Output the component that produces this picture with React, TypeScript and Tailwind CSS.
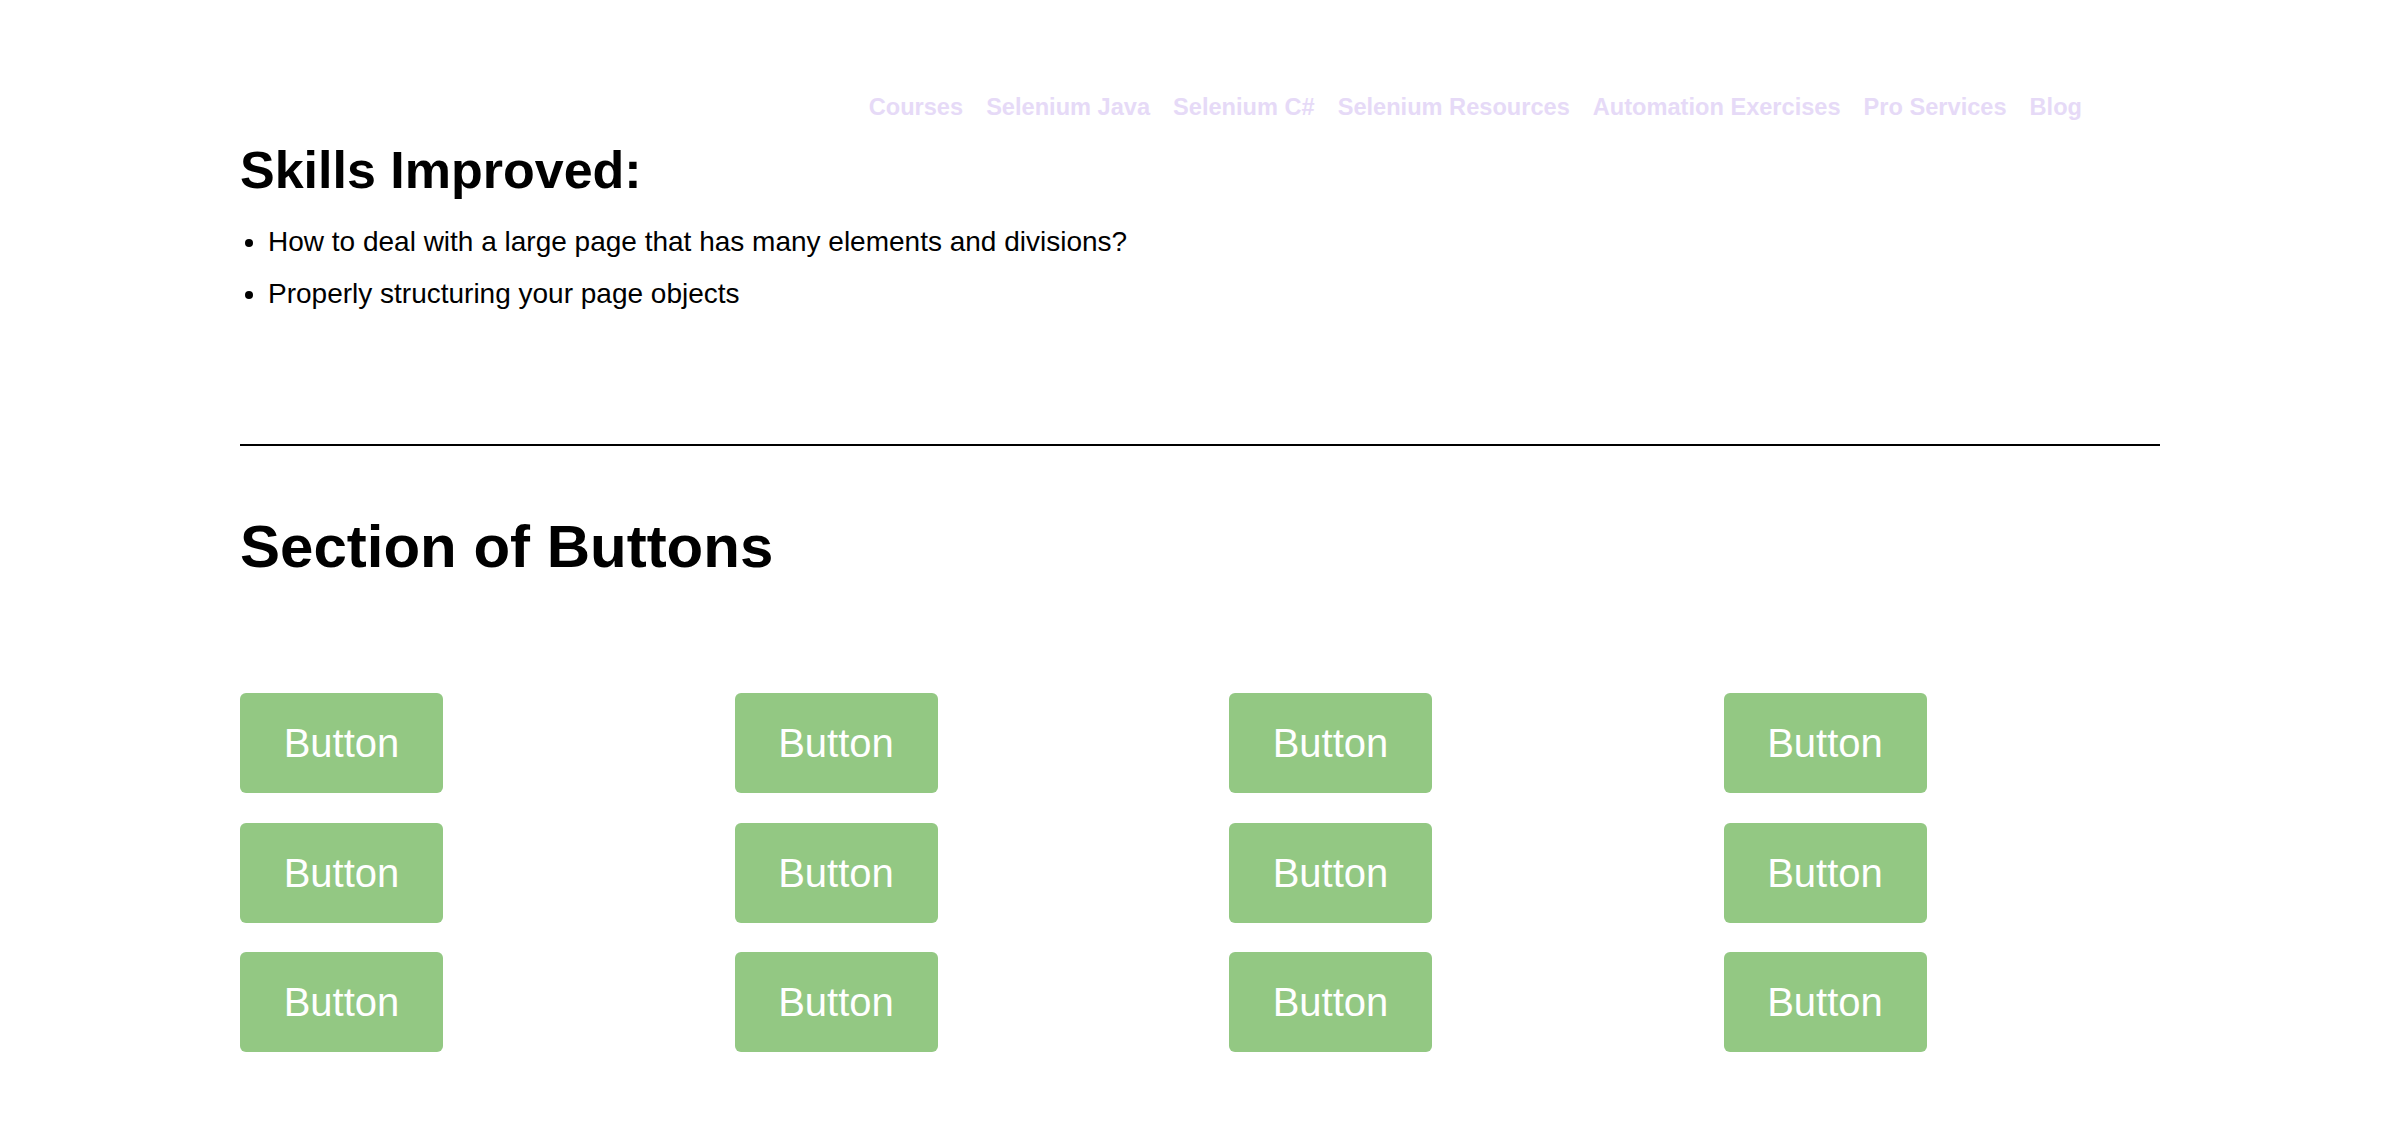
const navLinks = [
  "Courses",
  "Selenium Java",
  "Selenium C#",
  "Selenium Resources",
  "Automation Exercises",
  "Pro Services",
  "Blog",
];

const skills = [
  "How to deal with a large page that has many elements and divisions?",
  "Properly structuring your page objects",
];

const App = () => {
  const buttons = Array.from({ length: 12 }, (_, i) => i);
  return (
    <div className="min-h-screen bg-white font-['Liberation_Sans',Arial,sans-serif] text-black">
      <div className="mx-auto w-[1920px]">
        <nav className="flex justify-end gap-[23px] pt-[93px] pr-[78px] text-[23.6px] leading-[28px] font-bold text-[#e6daf7]">
          {navLinks.map((link) => (
            <a key={link} href="#">
              {link}
            </a>
          ))}
        </nav>

        <h2 className="mt-[21px] text-[52px] leading-[56px] font-bold">
          Skills Improved:
        </h2>
        <ul className="mt-[18px] list-disc pl-[28px] text-[28px] leading-[52px]">
          {skills.map((skill) => (
            <li key={skill}>{skill}</li>
          ))}
        </ul>

        <hr className="mt-[124px] border-t-2 border-black" />

        <h2 className="mt-[67px] text-[60px] leading-[68px] font-bold">
          Section of Buttons
        </h2>

        <div className="mt-[112px] grid grid-cols-[repeat(4,494.5px)] gap-y-[29.5px] pb-[80px]">
          {buttons.map((b) => (
            <div key={b}>
              <button className="flex h-[100px] w-[203px] items-center justify-center rounded-[6px] bg-[#93c883] text-[40px] leading-none text-white">
                Button
              </button>
            </div>
          ))}
        </div>
      </div>
    </div>
  );
};

export default App;
